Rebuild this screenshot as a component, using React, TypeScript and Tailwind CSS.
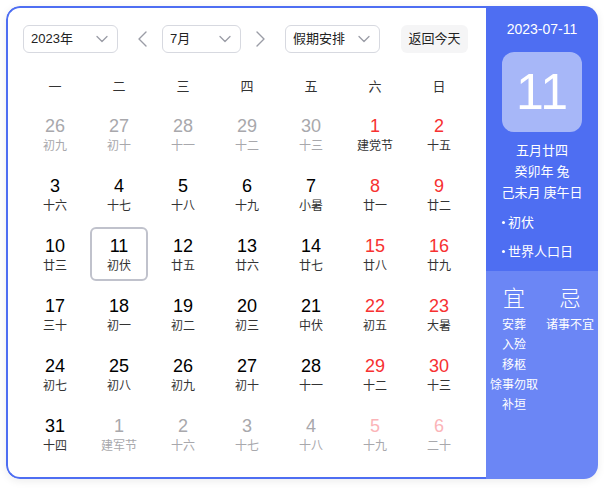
import React from "react";

const rowsData: [string, string][][] = [
  [["26", "初九"], ["27", "初十"], ["28", "十一"], ["29", "十二"], ["30", "十三"], ["1", "建党节"], ["2", "十五"]],
  [["3", "十六"], ["4", "十七"], ["5", "十八"], ["6", "十九"], ["7", "小暑"], ["8", "廿一"], ["9", "廿二"]],
  [["10", "廿三"], ["11", "初伏"], ["12", "廿五"], ["13", "廿六"], ["14", "廿七"], ["15", "廿八"], ["16", "廿九"]],
  [["17", "三十"], ["18", "初一"], ["19", "初二"], ["20", "初三"], ["21", "中伏"], ["22", "初五"], ["23", "大暑"]],
  [["24", "初七"], ["25", "初八"], ["26", "初九"], ["27", "初十"], ["28", "十一"], ["29", "十二"], ["30", "十三"]],
  [["31", "十四"], ["1", "建军节"], ["2", "十六"], ["3", "十七"], ["4", "十八"], ["5", "十九"], ["6", "二十"]],
];

const weeks = ["一", "二", "三", "四", "五", "六", "日"];

function Chevron() {
  return (
    <svg width="12" height="8" viewBox="0 0 12 8" fill="none">
      <path d="M1 1.5L6 6.5L11 1.5" stroke="#9a9ca6" strokeWidth="1.3" strokeLinecap="round" strokeLinejoin="round" />
    </svg>
  );
}

function Arrow({ dir }: { dir: "l" | "r" }) {
  return (
    <svg width="16" height="18" viewBox="0 0 16 18" fill="none">
      {dir === "l" ? (
        <path d="M11 2L4 9L11 16" stroke="#9a9ca6" strokeWidth="1.4" strokeLinecap="round" strokeLinejoin="round" />
      ) : (
        <path d="M5 2L12 9L5 16" stroke="#9a9ca6" strokeWidth="1.4" strokeLinecap="round" strokeLinejoin="round" />
      )}
    </svg>
  );
}

function Select({ label, w }: { label: string; w: string }) {
  return (
    <div className={`${w} h-[28px] border border-[#d7d9e0] rounded-[6px] flex items-center justify-between pl-[7px] pr-[9px] text-[13px] text-[#222]`}>
      <span>{label}</span>
      <Chevron />
    </div>
  );
}

export default function App() {
  const font = { fontFamily: '"Liberation Sans", Arial, "Noto Sans CJK SC", sans-serif' };
  const cjk = { fontFamily: '"Noto Sans CJK SC", sans-serif' };
  return (
    <div className="w-[604px] h-[493px] bg-white p-[6px]" style={font}>
      <div className="w-[592px] h-[473px] flex rounded-[14px] overflow-hidden shadow-[0_2px_8px_rgba(0,0,0,0.08)]">
        {/* left */}
        <div className="w-[480px] h-full border-2 border-r-0 border-[#4e6ef2] rounded-l-[14px] px-[15px] pt-[17px]">
          <div className="flex items-center h-[28px]">
            <Select label="2023年" w="w-[95px]" />
            <div className="ml-[17px]"><Arrow dir="l" /></div>
            <div className="ml-[11px]"><Select label="7月" w="w-[79px]" /></div>
            <div className="ml-[11px]"><Arrow dir="r" /></div>
            <div className="ml-[17px]"><Select label="假期安排" w="w-[95px]" /></div>
            <div className="ml-[21px] w-[67px] h-[28px] bg-[#f5f5f6] rounded-[6px] flex items-center justify-center text-[13px] text-[#222]">返回今天</div>
          </div>
          <div className="grid grid-cols-7 mt-[17px] h-[34px] items-center">
            {weeks.map((w) => (
              <div key={w} className="text-center text-[13px] text-[#333]">{w}</div>
            ))}
          </div>
          <div className="flex flex-col">
            {rowsData.map((row, ri) => (
              <div key={ri} className="grid grid-cols-7 h-[60px]">
                {row.map(([n, l], ci) => {
                  const other = (ri === 0 && ci < 5) || (ri === 5 && ci > 0);
                  const weekend = ci >= 5;
                  const selected = ri === 2 && ci === 1;
                  const numColor = other
                    ? weekend
                      ? "text-[#fbb4b8]"
                      : "text-[#a8a8ac]"
                    : weekend
                    ? "text-[#f73131]"
                    : "text-black";
                  const lColor = other ? "text-[#a8a8ac]" : "text-[#333]";
                  return (
                    <div key={ci} className="flex justify-center pt-[3px]">
                      <div
                        className={`w-[58px] h-[54px] rounded-[6px] flex flex-col items-center ${
                          selected ? "border-2 border-[#c0c2cc] pt-[7px]" : "pt-[9px]"
                        }`}
                      >
                        <div className={`text-[18px] leading-[20px] ${numColor}`}>{n}</div>
                        <div className={`text-[12px] leading-[18px] ${lColor}`} style={cjk}>{l}</div>
                      </div>
                    </div>
                  );
                })}
              </div>
            ))}
          </div>
        </div>
        {/* right */}
        <div className="w-[112px] h-full flex flex-col text-white">
          <div className="bg-[#4e6ef2] h-[265px] flex flex-col items-center">
            <div className="mt-[14px] text-[14px] leading-[18px]">2023-07-11</div>
            <div className="mt-[14px] w-[80px] h-[80px] rounded-[12px] bg-[#a7b7f8] flex items-center justify-center text-[50px] leading-none">11</div>
            <div className="mt-[7px] flex flex-col items-center text-[13px] leading-[21px]" style={cjk}>
              <div>五月廿四</div>
              <div>癸卯年 兔</div>
              <div>己未月 庚午日</div>
            </div>
            <div className="self-start pl-[16px] mt-[11px] flex flex-col gap-[11px] text-[13px] leading-[18px]" style={cjk}>
              <div className="flex items-center"><span className="w-[3px] h-[3px] rounded-full bg-white mr-[3px]"></span>初伏</div>
              <div className="flex items-center"><span className="w-[3px] h-[3px] rounded-full bg-white mr-[3px]"></span>世界人口日</div>
            </div>
          </div>
          <div className="bg-[#6b86f5] flex-1 grid grid-cols-2 pt-[12px]" style={cjk}>
            <div className="flex flex-col items-center">
              <div className="text-[22px] leading-[26px] font-light">宜</div>
              <div className="mt-[5px] flex flex-col items-center text-[12px] leading-[20px] whitespace-nowrap">
                <div>安葬</div>
                <div>入殓</div>
                <div>移柩</div>
                <div>馀事勿取</div>
                <div>补垣</div>
              </div>
            </div>
            <div className="flex flex-col items-center">
              <div className="text-[22px] leading-[26px] font-light">忌</div>
              <div className="mt-[5px] flex flex-col items-center text-[12px] leading-[20px] whitespace-nowrap">
                <div>诸事不宜</div>
              </div>
            </div>
          </div>
        </div>
      </div>
    </div>
  );
}
